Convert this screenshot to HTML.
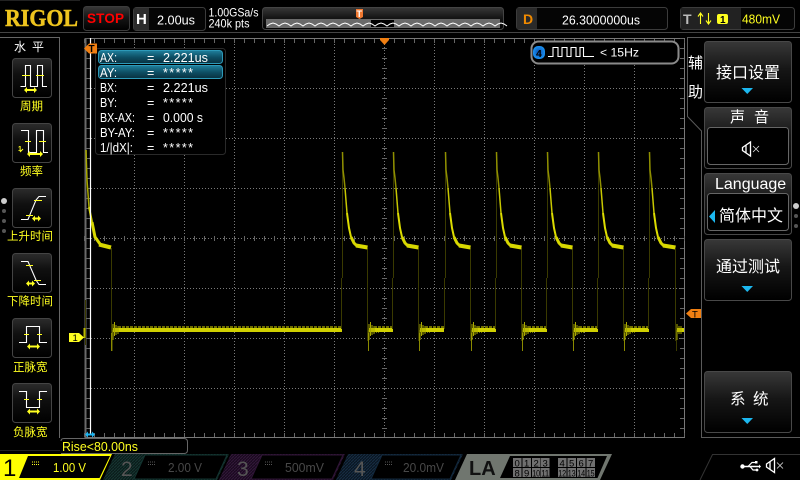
<!DOCTYPE html>
<html><head><meta charset="utf-8"><style>
html,body{margin:0;padding:0;background:#000;width:800px;height:480px;overflow:hidden}
svg{display:block}
text{font-family:"Liberation Sans","WenQuanYi Zen Hei","Noto Sans CJK SC",sans-serif;fill:#fff;white-space:pre}
.c{font-family:"WenQuanYi Zen Hei","Noto Sans CJK SC",sans-serif}
.y{fill:#ffff20}
.g{stroke:#7a7a7a;stroke-width:1;stroke-dasharray:1 2;fill:none}
.t{stroke:#666;fill:none}
.w{fill:none;stroke:#fff;stroke-width:1.1}
.yl{stroke:#ffff20;stroke-width:1.1;fill:none}
</style></head><body>
<svg width="800" height="480" viewBox="0 0 800 480" xmlns="http://www.w3.org/2000/svg">
<defs>
<linearGradient id="b" x1="0" y1="0" x2="0" y2="1"><stop offset="0" stop-color="#383838"/><stop offset=".45" stop-color="#161616"/><stop offset="1" stop-color="#000"/></linearGradient>
<linearGradient id="bh" x1="0" y1="0" x2="0" y2="1"><stop offset="0" stop-color="#2c2c2c"/><stop offset=".4" stop-color="#101010"/><stop offset="1" stop-color="#000"/></linearGradient>
<linearGradient id="hl" x1="0" y1="0" x2="0" y2="1"><stop offset="0" stop-color="#1f7f9c"/><stop offset=".5" stop-color="#0e5066"/><stop offset="1" stop-color="#08303f"/></linearGradient>
<radialGradient id="blu"><stop offset="0" stop-color="#0a4fb0"/><stop offset="1" stop-color="#1a90f0"/></radialGradient>
<pattern id="h2" width="3" height="3" patternUnits="userSpaceOnUse"><rect width="3" height="3" fill="#0a1c1a"/><path d="M0 3L3 0" stroke="#163632" stroke-width="1"/></pattern>
<pattern id="h3" width="3" height="3" patternUnits="userSpaceOnUse"><rect width="3" height="3" fill="#1a0a1f"/><path d="M0 3L3 0" stroke="#33183a" stroke-width="1"/></pattern>
<pattern id="h4" width="3" height="3" patternUnits="userSpaceOnUse"><rect width="3" height="3" fill="#0a1622"/><path d="M0 3L3 0" stroke="#162e44" stroke-width="1"/></pattern>
<g id="pulse">
<path d="M-.5 329V278M.5 278V152" stroke="#3a3a00" stroke-width="1" fill="none"/>
<path d="M25.5 248V341M26.500 330V351" stroke="#3a3a00" stroke-width="1" fill="none"/>
<path d="M26.500 333V351" stroke="#8a8a00" stroke-width="1"/>
<path d="M.5 152L1 170 2 178 3 188" stroke="#8f8f00" stroke-width="1.500" fill="none"/>
<path d="M3 188L5 213" stroke="#c8c800" stroke-width="1.500" fill="none"/>
<path d="M5 213L7 228 9 237" stroke="#dcdc00" stroke-width="2" fill="none"/>
<path d="M9 237L12 243 15 246" stroke="#d8d800" stroke-width="3" fill="none"/>
<path d="M14 245.500L25.500 247.500" stroke="#d8d800" stroke-width="4" fill="none"/>
<rect x="27" y="328" width="24" height="4" fill="#d0d000"/>
<path d="M27 324V340M28.500 322V336M30 325V335M32 326V334" stroke="#a8a800" stroke-width="1"/>
<path d="M32 327H51" stroke="#6e6e00" stroke-width="2" stroke-dasharray="3 1"/>
<path d="M32 332.500H38" stroke="#6e6e00" stroke-width="1" stroke-dasharray="1 1"/>
</g>
<g id="spk"><path d="M.5 -1.500L8.500 -7V7L.5 1.500Z" fill="#000" stroke="#fff" stroke-width="1.300"/><path d="M4 -3.500V3.500" stroke="#fff" stroke-width="1.300"/><path d="M11 -3L17 3M17 -3L11 3" stroke="#ddd" stroke-width=".8"/></g>
<path id="ar" d="M0 0L3-3V-1H10V-3L13 0 10 3V1H3V3Z" fill="#ffff20"/>
<path id="ar9" d="M0 0L3-3V-1H6V-3L9 0 6 3V1H3V3Z" fill="#ffff20"/>
<path id="ar16" d="M0 0L3-3V-1H13V-3L16 0 13 3V1H3V3Z" fill="#ffff20"/>
</defs>
<rect width="800" height="480" fill="#000"/>

<!-- top bar -->
<text x="5" y="26" font-size="24" font-weight="bold" style="font-family:'Liberation Serif',serif;fill:#eec41e;stroke:#eec41e;stroke-width:.5" textLength="73" lengthAdjust="spacingAndGlyphs">RIGOL</text>
<rect x="83.500" y="6.500" width="46" height="24" rx="3" fill="url(#b)" stroke="#3c3c3c"/>
<text x="87" y="23" font-size="13.500" font-weight="bold" style="fill:#f00" textLength="37" lengthAdjust="spacing">STOP</text>
<rect x="133.500" y="7.500" width="72" height="23" rx="3" fill="#050505" stroke="#3c3c3c"/>
<rect x="134" y="8" width="15" height="22" fill="#2c2c2c"/>
<text x="136" y="24" font-size="15" font-weight="bold">H</text>
<text x="157" y="24.500" font-size="13" textLength="38" lengthAdjust="spacingAndGlyphs">2.00us</text>
<text x="208.500" y="16.500" font-size="12" textLength="50" lengthAdjust="spacingAndGlyphs">1.00GSa/s</text>
<text x="208.500" y="27.500" font-size="12" textLength="41" lengthAdjust="spacingAndGlyphs">240k pts</text>

<rect x="262.500" y="7.500" width="241" height="22" rx="3" fill="url(#b)" stroke="#444"/>
<rect x="266" y="19" width="234" height="9" fill="#6a6a6a"/>
<rect x="371" y="20" width="23" height="7" fill="#000"/>
<path d="M267 26l3-2 3-1 3 1 3 2 3-2 3-1 3 1 3 2 3-2 3-1 3 1 3 2 3-2 3-1 3 1 3 2 3-2 3-1 3 1 3 2 3-2 3-1 3 1 3 2 3-2 3-1 3 1 3 2 3-2 3-1 3 1 3 2 3-2 3-1 3 1 3 2 3-2 3-1 3 1 3 2 3-2 3-1 3 1 3 2 3-2 3-1 3 1 3 2 3-2 3-1 3 1 3 2 3-2 3-1 3 1 3 2 3-2 3-1 3 1 3 2 3-2 3-1 3 1 3 2 3-2 3-1 3 1 3 2 3-2 3-1 3 1 3 2 3-2 3-1 3 1 3 2 3-2 3-1 3 1 3 2" fill="none" stroke="#fff" stroke-width="1"/>
<path d="M356 9H363V17L359.500 19 356 17Z" fill="#f07830"/>
<text x="356.500" y="17" font-size="9" font-weight="bold" style="fill:#fff">T</text>

<rect x="516.500" y="7.500" width="151" height="22" rx="3" fill="#050505" stroke="#3c3c3c"/>
<rect x="517" y="8" width="20" height="21" fill="#2a2a2a"/>
<text x="523" y="24" font-size="14" font-weight="bold" style="fill:#f08a00">D</text>
<text x="562" y="24.500" font-size="13" textLength="78" lengthAdjust="spacingAndGlyphs">26.3000000us</text>
<rect x="680.500" y="7.500" width="114" height="22" rx="3" fill="#050505" stroke="#3c3c3c"/>
<rect x="681" y="8" width="60" height="21" fill="#222"/>
<text x="683" y="24" font-size="14" font-weight="bold" style="fill:#bbb">T</text>
<path d="M700.500 24V14M698 16.500L700.500 13 703 16.500" class="yl"/>
<path d="M708.500 13V23M706 20.500L708.500 24 711 20.500" class="yl"/>
<rect x="717" y="14" width="11" height="10" rx="2" fill="#ffff20"/>
<text x="720" y="23" font-size="10" font-weight="bold" style="fill:#000">1</text>
<text x="742" y="23.500" font-size="12.500" class="y" textLength="38" lengthAdjust="spacingAndGlyphs">480mV</text>
<path d="M0 32.500H800" stroke="#444"/>
<path d="M0 .5H80" stroke="#222"/>

<!-- grid -->
<path class="g" d="M134.500 38V438M184.500 38V438M234.500 38V438M284.500 38V438M334.500 38V438M434.500 38V438M484.500 38V438M534.500 38V438M584.500 38V438M634.500 38V438
M85 88.500H684M85 138.500H684M85 188.500H684M85 288.500H684M85 338.500H684M85 388.500H684"/>
<path class="g" d="M85 238.500H684M384.500 38V438"/>
<!-- ticks -->
<path d="M85 38.500H685M85 437.500H685M684.500 38V438" stroke="#777" fill="none"/>
<path d="M85.500 38V438" stroke="#6a6a6a" stroke-width="2" fill="none"/>
<path class="t" stroke-width="4" stroke-dasharray="1 9" d="M84 41H685"/>
<path class="t" stroke-width="4" stroke-dasharray="1 9" d="M84 435H685"/>
<path class="t" stroke-width="4" stroke-dasharray="1 9" d="M88 38V438"/>
<path class="t" stroke-width="4" stroke-dasharray="1 9" d="M682 38V438"/>
<path class="t" stroke-width="5" stroke-dasharray="1 9" d="M384.500 38V438"/>
<path class="t" stroke-width="5" stroke-dasharray="1 9" d="M84 238.500H685"/>

<!-- waveform -->
<path d="M86.500 150V190M85.500 300V345" stroke="#3a3a00"/>
<path d="M86 150L87 180 89 207" stroke="#a8a800" stroke-width="1.500" fill="none"/>
<path d="M89 207L92 222" stroke="#d0d000" stroke-width="2" fill="none"/>
<path d="M92 222L95 237 100 244" stroke="#d8d800" stroke-width="3" fill="none"/>
<path d="M99 244.500L111 247.500" stroke="#d8d800" stroke-width="4" fill="none"/>
<path d="M111.500 248V341M112.500 330V351" stroke="#3a3a00"/>
<path d="M111.500 333V351" stroke="#8a8a00"/>
<path d="M84.500 328V338" stroke="#b8b800" stroke-width="2"/>
<rect x="113" y="328" width="229" height="4" fill="#d0d000"/>
<path d="M113 324V340M114.500 322V336M116 325V335M118 326V334" stroke="#a8a800"/>
<path d="M118 327H341" stroke="#6e6e00" stroke-width="2" stroke-dasharray="3 1"/>
<use href="#pulse" x="342"/><use href="#pulse" x="393"/><use href="#pulse" x="445"/><use href="#pulse" x="496"/><use href="#pulse" x="547"/><use href="#pulse" x="598"/>
<g>
<path d="M648.500 329V278M649.500 278V152" stroke="#3a3a00" fill="none"/>
<path d="M649.500 152L650 170 651 178 652 188" stroke="#8f8f00" stroke-width="1.500" fill="none"/>
<path d="M652 188L654 213" stroke="#c8c800" stroke-width="1.500" fill="none"/>
<path d="M654 213L656 228 658 237" stroke="#dcdc00" stroke-width="2" fill="none"/>
<path d="M658 237L661 243 664 246" stroke="#d8d800" stroke-width="3" fill="none"/>
<path d="M663 245.500L675.500 247.500" stroke="#d8d800" stroke-width="4" fill="none"/>
<path d="M675.500 248V341M676.500 330V351" stroke="#3a3a00"/>
<rect x="677" y="328" width="7" height="4" fill="#d0d000"/>
<path d="M677 324V340M679 326V334M681 326V334" stroke="#a8a800"/>
</g>

<!-- AX cursor -->
<path d="M90.500 38V434" stroke="#fff" stroke-width="1.200"/>

<!-- cursor panel -->
<rect x="95.500" y="48.500" width="130" height="106" rx="3" fill="#000" stroke="#2a2a2a"/>
<rect x="98.500" y="50.500" width="124" height="13" rx="3" fill="url(#hl)" stroke="#2d99b8"/>
<rect x="98.500" y="65.500" width="124" height="13" rx="3" fill="url(#hl)" stroke="#2d99b8"/>
<g font-size="12.500" style="fill:#eee">
<text x="100" y="62" textLength="17" lengthAdjust="spacingAndGlyphs">AX:</text><text x="147" y="62">=</text><text x="163" y="62" textLength="45" lengthAdjust="spacingAndGlyphs">2.221us</text>
<text x="100" y="77" textLength="17" lengthAdjust="spacingAndGlyphs">AY:</text><text x="147" y="77">=</text><text x="163" y="77" textLength="30">*****</text>
<text x="100" y="92" textLength="17" lengthAdjust="spacingAndGlyphs">BX:</text><text x="147" y="92">=</text><text x="163" y="92" textLength="45" lengthAdjust="spacingAndGlyphs">2.221us</text>
<text x="100" y="107" textLength="17" lengthAdjust="spacingAndGlyphs">BY:</text><text x="147" y="107">=</text><text x="163" y="107" textLength="30">*****</text>
<text x="100" y="122" textLength="35" lengthAdjust="spacingAndGlyphs">BX-AX:</text><text x="147" y="122">=</text><text x="163" y="122" textLength="40" lengthAdjust="spacingAndGlyphs">0.000 s</text>
<text x="100" y="137" textLength="35" lengthAdjust="spacingAndGlyphs">BY-AY:</text><text x="147" y="137">=</text><text x="163" y="137" textLength="30">*****</text>
<text x="100" y="152" textLength="33" lengthAdjust="spacingAndGlyphs">1/|dX|:</text><text x="147" y="152">=</text><text x="163" y="152" textLength="30">*****</text>
</g>

<!-- markers -->
<path d="M84 48.500L89 43.500H97V53.500H89Z" fill="#f07f12"/>
<text x="88.500" y="52" font-size="10" font-weight="bold" style="fill:#000">T</text>
<path d="M380 38H389V40L384.500 45 380 40Z" fill="#f07f12"/>
<path d="M686 313.500L691 309H701V318H691Z" fill="#f07f12"/>
<text x="692" y="317.500" font-size="9.500" style="fill:#000">T</text>
<path d="M69 333H79L84 337.500 79 342H69Z" fill="#ffff20"/>
<text x="72.500" y="341" font-size="9.500" style="fill:#000">1</text>
<path d="M85 434.500L88 431.500V433.500H92V431.500L95 434.500 92 437.500V435.500H88V437.500Z" fill="#1cb4f0"/>

<!-- freq pill -->
<rect x="531.500" y="41.500" width="147" height="22" rx="7" fill="#000" stroke="#8a8a8a" stroke-width="2"/>
<rect x="533" y="46" width="12" height="13" rx="5" fill="url(#blu)"/>
<text x="536" y="57" font-size="10.500" style="fill:#000" font-weight="bold">4</text>
<path d="M548 56.500H553V47.500H558V56.500H562V47.500H567V56.500H571V47.500H576V56.500H580V47.500H583.500V56.500H594" fill="none" stroke="#fff" stroke-width="1.100"/>
<text x="600" y="56.500" font-size="12" textLength="39" lengthAdjust="spacingAndGlyphs">&lt; 15Hz</text>

<!-- left panel -->
<path d="M0 37.500H59.500V438" stroke="#666" fill="none"/>
<path d="M0 450.500H60" stroke="#222"/>
<text class="c" x="14" y="51" font-size="12">水</text><text class="c" x="32" y="51" font-size="12">平</text>
<g fill="url(#bh)" stroke="#444">
<rect x="12.500" y="58.500" width="39" height="39" rx="3"/>
<rect x="12.500" y="123.500" width="39" height="39" rx="3"/>
<rect x="12.500" y="188.500" width="39" height="39" rx="3"/>
<rect x="12.500" y="253.500" width="39" height="39" rx="3"/>
<rect x="12.500" y="318.500" width="39" height="39" rx="3"/>
<rect x="12.500" y="383.500" width="39" height="39" rx="3"/>
</g>
<path class="w" d="M20.500 86.500H25.500V65.500H30.500V86.500H37.500V65.500H42.500V86.500H47"/>
<path class="yl" d="M22 75.500H30M36 75.500H44"/><use href="#ar" x="24" y="90"/>
<text class="c y" x="20" y="110" font-size="11.500">周期</text>
<path class="w" d="M21 130.500H28.500V152.500H36.500V130.500H43.500V152.500H48"/>
<path class="yl" d="M25 141.500H31M39 141.500H46M20 152L23 149"/>
<text x="18" y="151" font-size="7" class="y" font-weight="bold">1</text>
<use href="#ar16" x="27" y="154"/>
<text class="c y" x="20" y="175" font-size="11.500">频率</text>
<path class="w" d="M21 219.500H28L36 200 39 196.500H46"/>
<path class="yl" d="M26 215.500H33M34 200.500H42"/><use href="#ar9" x="32" y="218.500"/>
<text class="c y" x="7" y="240" font-size="11.500">上升时间</text>
<path class="w" d="M21 261.500H28L36 280 39 284.500H46"/>
<path class="yl" d="M26 265.500H33M34 280.500H41"/><use href="#ar9" x="26" y="283.500"/>
<text class="c y" x="7" y="305" font-size="11.500">下降时间</text>
<path class="w" d="M19 342.500H26.500V326.500H39.500V342.500H47"/>
<path class="yl" d="M24 334.500H29M37 334.500H42"/><use href="#ar" x="27" y="346.500"/>
<text class="c y" x="13" y="371" font-size="11.500">正脉宽</text>
<path class="w" d="M19 391.500H26.500V407.500H39.500V391.500H47"/>
<path class="yl" d="M24 399.500H29M37 399.500H42"/><use href="#ar" x="27" y="411.500"/>
<text class="c y" x="13" y="436" font-size="11.500">负脉宽</text>
<circle cx="4" cy="201" r="3" fill="#ccc"/><circle cx="4" cy="211" r="2" fill="#555"/><circle cx="4" cy="221" r="2" fill="#555"/><circle cx="4" cy="231" r="2" fill="#555"/>

<!-- rise box -->
<path d="M61 453.500H184Q187.500 453.500 187.500 450V442Q187.500 438.500 184 438.500H64Q61 438.500 61 441" fill="none" stroke="#666"/>
<text x="62" y="451" font-size="13" class="y" textLength="76" lengthAdjust="spacingAndGlyphs">Rise&lt;80.00ns</text>

<!-- right panel -->
<path d="M800 37.500H687.500V116.500L701.500 131V437.500H800" fill="none" stroke="#5a5a5a"/>
<text class="c" x="688" y="68" font-size="15">辅</text><text class="c" x="688" y="97" font-size="15">助</text>
<g fill="url(#b)" stroke="#484848">
<rect x="704.500" y="41.500" width="87" height="61" rx="3"/>
<rect x="704.500" y="107.500" width="87" height="61" rx="3"/>
<rect x="704.500" y="173.500" width="87" height="61" rx="3"/>
<rect x="704.500" y="239.500" width="87" height="61" rx="3"/>
<rect x="704.500" y="371.500" width="87" height="61" rx="3"/>
</g>
<rect x="707.500" y="127.500" width="81" height="37" rx="3" fill="#000" stroke="#666"/>
<rect x="707.500" y="193.500" width="81" height="37" rx="3" fill="#000" stroke="#666"/>
<text class="c" x="716" y="78" font-size="16">接口设置</text>
<path d="M741.500 88H753L747.250 94Z" fill="#1cb8f0"/>
<text class="c" x="730" y="122" font-size="15">声</text><text class="c" x="754" y="122" font-size="15">音</text>
<use href="#spk" x="742" y="149"/>
<text x="715" y="189" font-size="16">Language</text>
<path d="M709 216.500L715 210V223Z" fill="#1cb8f0"/>
<text class="c" x="719" y="221" font-size="16">简体中文</text>
<text class="c" x="716" y="272" font-size="16">通过测试</text>
<path d="M741.500 286H753L747.250 292Z" fill="#1cb8f0"/>
<text class="c" x="730" y="404" font-size="15.500">系</text><text class="c" x="753" y="404" font-size="15.500">统</text>
<path d="M741.500 418H753L747.250 424Z" fill="#1cb8f0"/>
<circle cx="796" cy="206" r="3" fill="#ccc"/><circle cx="796" cy="216" r="2" fill="#555"/><circle cx="796" cy="226" r="2" fill="#555"/>

<!-- bottom channels -->
<path d="M0 454H112L100 480H0Z" fill="#ffff00"/>
<path d="M28 456H110L99.500 478H19Z" fill="#000"/>
<text x="3" y="476" font-size="24" style="fill:#000">1</text>
<path d="M32 462H39M32 464.500H39" stroke="#ffff20" stroke-dasharray="1 1"/>
<text x="53" y="472" font-size="13" class="y" textLength="33" lengthAdjust="spacingAndGlyphs">1.00 V</text>

<path d="M115 454H229L217 480H103Z" fill="url(#h2)"/>
<path d="M145 455H227L216 479H134Z" fill="#000" stroke="#12332f"/>
<text x="121" y="476" font-size="21" style="fill:#555">2</text>
<path d="M148 462H155M148 464.500H155" stroke="#555" stroke-dasharray="1 1"/>
<text x="168" y="472" font-size="13" style="fill:#484848" textLength="34" lengthAdjust="spacingAndGlyphs">2.00 V</text>

<path d="M231 454H345L333 480H219Z" fill="url(#h3)"/>
<path d="M262 455H343L332 479H251Z" fill="#000" stroke="#2e1535"/>
<text x="237" y="476" font-size="21" style="fill:#555">3</text>
<path d="M265 462H272M265 464.500H272" stroke="#555" stroke-dasharray="1 1"/>
<text x="285" y="472" font-size="13" style="fill:#484848" textLength="39" lengthAdjust="spacingAndGlyphs">500mV</text>

<path d="M348 454H463L451 480H336Z" fill="url(#h4)"/>
<path d="M382 455H461L450 479H371Z" fill="#000" stroke="#12283c"/>
<text x="354" y="476" font-size="21" style="fill:#555">4</text>
<path d="M385 462H392M385 464.500H392" stroke="#555" stroke-dasharray="1 1"/>
<text x="403" y="472" font-size="13" style="fill:#484848" textLength="41" lengthAdjust="spacingAndGlyphs">20.0mV</text>

<path d="M467 454H612L600 480H455Z" fill="#70766f"/>
<path d="M510 456H607L597.500 478H500Z" fill="#000"/>
<text x="469" y="475" font-size="20" font-weight="bold" style="fill:#111">LA</text>
<g fill="#707070">
<rect x="513" y="458" width="8.500" height="9"/><rect x="522.500" y="458" width="8.500" height="9"/><rect x="532" y="458" width="8.500" height="9"/><rect x="541" y="458" width="8.500" height="9"/>
<rect x="558" y="458" width="8.500" height="9"/><rect x="567.500" y="458" width="8.500" height="9"/><rect x="577" y="458" width="8.500" height="9"/><rect x="586.500" y="458" width="8.500" height="9"/>
<rect x="513" y="468" width="8.500" height="9"/><rect x="522.500" y="468" width="8.500" height="9"/><rect x="532" y="468" width="8.500" height="9"/><rect x="541" y="468" width="8.500" height="9"/>
<rect x="558" y="468" width="8.500" height="9"/><rect x="567.500" y="468" width="8.500" height="9"/><rect x="577" y="468" width="8.500" height="9"/><rect x="586.500" y="468" width="8.500" height="9"/>
</g>
<g font-size="9.500" text-anchor="middle">
<text x="517.200" y="466.500" style="fill:#000">0</text><text x="526.700" y="466.500" style="fill:#000">1</text><text x="536.200" y="466.500" style="fill:#000">2</text><text x="545.200" y="466.500" style="fill:#000">3</text>
<text x="562.200" y="466.500" style="fill:#000">4</text><text x="571.700" y="466.500" style="fill:#000">5</text><text x="581.200" y="466.500" style="fill:#000">6</text><text x="590.700" y="466.500" style="fill:#000">7</text>
<text x="517.200" y="476.500" style="fill:#000">8</text><text x="526.700" y="476.500" style="fill:#000">9</text><text x="536.200" y="476.500" style="fill:#000" textLength="8" lengthAdjust="spacingAndGlyphs">10</text><text x="545.200" y="476.500" style="fill:#000" textLength="8" lengthAdjust="spacingAndGlyphs">11</text>
<text x="562.200" y="476.500" style="fill:#000" textLength="8" lengthAdjust="spacingAndGlyphs">12</text><text x="571.700" y="476.500" style="fill:#000" textLength="8" lengthAdjust="spacingAndGlyphs">13</text><text x="581.200" y="476.500" style="fill:#000" textLength="8" lengthAdjust="spacingAndGlyphs">14</text><text x="590.700" y="476.500" style="fill:#000" textLength="8" lengthAdjust="spacingAndGlyphs">15</text>
</g>

<path d="M800 454.500H712.500L700 480" fill="none" stroke="#333"/>
<g>
<path d="M741 466.500H759" stroke="#fff" stroke-width="1.600"/>
<circle cx="742.500" cy="466.500" r="2.200" fill="#fff"/>
<path d="M748 466.500L752 462.500H755M750 466.500L753 470H756" fill="none" stroke="#fff" stroke-width="1.200"/>
<path d="M759 464.500L761 466.500 759 468.500Z" fill="#fff"/>
<rect x="755" y="461" width="2.500" height="2.500" fill="#fff"/><circle cx="757" cy="470" r="1.400" fill="#fff"/>
</g>
<use href="#spk" x="766" y="465.500"/>
</svg>
</body></html>
